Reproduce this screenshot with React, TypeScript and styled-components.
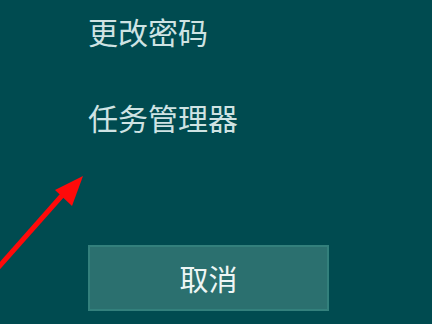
import React from 'react';
import styled, { createGlobalStyle } from 'styled-components';

const GlobalStyle = createGlobalStyle`
  html, body {
    margin: 0;
    padding: 0;
    background: #004b50;
  }
`;

const Screen = styled.div`
  position: relative;
  width: 432px;
  height: 324px;
  overflow: hidden;
  background: #004b50;
  font-family: "Noto Sans CJK SC", "Noto Sans", sans-serif;
`;

const Menu = styled.div`
  display: flex;
  flex-direction: column;
  align-items: flex-start;
  padding: 13px 0 0 88px;
`;

const MenuItem = styled.div<{ gap?: number }>`
  font-size: 30px;
  line-height: 36px;
  color: #cfe3e3;
  margin-bottom: ${p => p.gap ?? 0}px;
`;

const CancelButton = styled.button`
  width: 241px;
  height: 66px;
  box-sizing: border-box;
  background: #2b706f;
  border: 2px solid #33807c;
  color: #eef6f5;
  font-family: inherit;
  font-size: 29px;
  padding: 0;
  display: flex;
  align-items: center;
  justify-content: center;
`;

const Arrow = styled.svg`
  position: absolute;
  left: 0;
  top: 170px;
`;

const App = () => {
  return (
    <Screen>
      <GlobalStyle />
      <Menu>
        <MenuItem gap={50}>更改密码</MenuItem>
        <MenuItem gap={110}>任务管理器</MenuItem>
        <CancelButton>取消</CancelButton>
      </Menu>
      <Arrow width="90" height="110" viewBox="0 0 90 110">
        <line x1="-4" y1="100" x2="66" y2="21" stroke="#ff0a0a" strokeWidth="5" />
        <polygon points="83,6 55,20 72,36" fill="#ff0a0a" />
      </Arrow>
    </Screen>
  );
};

export default App;
